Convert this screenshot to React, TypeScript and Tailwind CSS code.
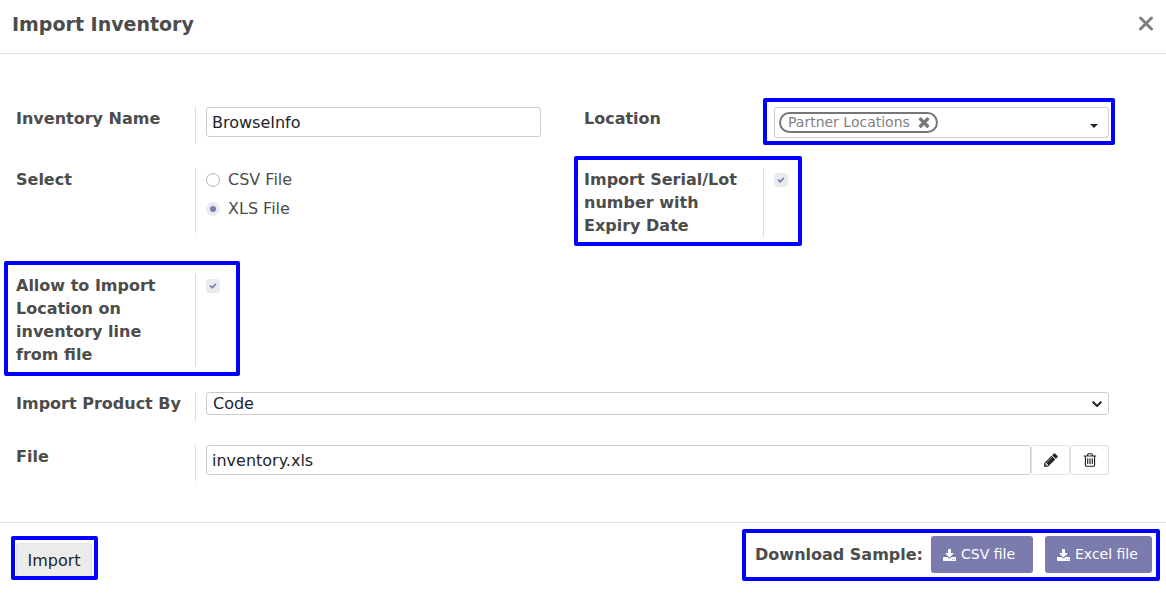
import { useState, type ReactNode } from "react";

const icons = {
  download:
    "M1280 1344q0-26-19-45t-45-19-45 19-19 45 19 45 45 19 45-19 19-45zm256 0q0-26-19-45t-45-19-45 19-19 45 19 45 45 19 45-19 19-45zm128-224v320q0 40-28 68t-68 28h-1472q-40 0-68-28t-28-68v-320q0-40 28-68t68-28h465l135 136q58 56 136 56t136-56l136-136h464q40 0 68 28t28 68zm-325-569q17 41-14 70l-448 448q-18 19-45 19t-45-19l-448-448q-31-29-14-70 17-39 59-39h256v-448q0-26 19-45t45-19h256q26 0 45 19t19 45v448h256q42 0 59 39z",
  pencil:
    "M491 1536l91-91-235-235-91 91v107h128v128h107zm523-928q0-22-22-22-10 0-17 7l-542 542q-7 7-7 17 0 22 22 22 10 0 17-7l542-542q7-7 7-17zm-54-192l416 416-832 832h-416v-416zm683 96q0 53-37 90l-166 166-416-416 166-165q36-38 90-38 53 0 91 38l235 234q37 39 37 91z",
  trash:
    "M704 736v576q0 14-9 23t-23 9h-64q-14 0-23-9t-9-23v-576q0-14 9-23t23-9h64q14 0 23 9t9 23zm256 0v576q0 14-9 23t-23 9h-64q-14 0-23-9t-9-23v-576q0-14 9-23t23-9h64q14 0 23 9t9 23zm256 0v576q0 14-9 23t-23 9h-64q-14 0-23-9t-9-23v-576q0-14 9-23t23-9h64q14 0 23 9t9 23zm128 724v-948h-896v948q0 22 7 40.5t14.5 27 10.5 8.5h832q3 0 10.5-8.5t14.5-27 7-40.5zm-672-1076h448l-48-117q-7-9-17-11h-317q-10 2-17 11zm928 32v64q0 14-9 23t-23 9h-96v948q0 83-47 143.5t-113 60.5h-832q-66 0-113-58.5t-47-141.5v-952h-96q-14 0-23-9t-9-23v-64q0-14 9-23t23-9h309l70-167q15-37 54-63t79-26h320q40 0 79 26t54 63l70 167h309q14 0 23 9t9 23z",
  times:
    "M1490 1322q0 40-28 68l-136 136q-28 28-68 28t-68-28l-294-294-294 294q-28 28-68 28t-68-28l-136-136q-28-28-28-68t28-68l294-294-294-294q-28-28-28-68t28-68l136-136q28-28 68-28t68 28l294 294 294-294q28-28 68-28t68 28l136 136q28 28 28 68t-28 68l-294 294 294 294q28 28 28 68z",
  check:
    "M1671 566q0 40-28 68l-724 724-136 136q-28 28-68 28t-68-28l-136-136-362-362q-28-28-28-68t28-68l136-136q28-28 68-28t68 28l294 295 656-657q28-28 68-28t68 28l136 136q28 28 28 68z",
};

function Icon({ name, className, viewBox = "0 0 1792 1792" }: { name: keyof typeof icons; className: string; viewBox?: string }) {
  return (
    <svg viewBox={viewBox} fill="currentColor" aria-hidden="true" className={className}>
      <path d={icons[name]} />
    </svg>
  );
}

/* Blue frame laid over the part of the form that it points out. */
function Highlight({ className }: { className: string }) {
  return <span aria-hidden="true" className={`pointer-events-none absolute rounded-xs border-4 border-[#0000ff] ${className}`} />;
}

function Field({ label, htmlFor, divider = true, children }: { label: string; htmlFor?: string; divider?: boolean; children: ReactNode }) {
  return (
    <div className="flex">
      <div className={`w-[180px] shrink-0 border-r pr-2 ${divider ? "border-[#dddddd]" : "border-transparent"}`}>
        <label htmlFor={htmlFor} className="block font-bold">
          {label}
        </label>
      </div>
      <div className="min-w-0 flex-1 pl-2.5">{children}</div>
    </div>
  );
}

function Checkbox({ id }: { id: string }) {
  const [on, setOn] = useState(true);
  return (
    <span className="relative mt-[5px] block size-3.5">
      <input
        id={id}
        type="checkbox"
        checked={on}
        onChange={() => setOn(!on)}
        className="block size-3.5 appearance-none rounded-[3px] border border-[#adb5bd] bg-white checked:border-[#e9ecef] checked:bg-[#e9ecef]"
      />
      {on && <Icon name="check" className="pointer-events-none absolute inset-0 m-auto size-2 text-[#7c7bad]" />}
    </span>
  );
}

export default function App() {
  const [name, setName] = useState("BrowseInfo");
  const [format, setFormat] = useState("XLS File");
  const [tagged, setTagged] = useState(true);
  const [file, setFile] = useState("inventory.xls");
  const box = "rounded-[3px] border border-[#cccccc] bg-white text-[#212529]";

  return (
    <div className="bg-white font-['DejaVu_Sans',sans-serif] text-[16px] leading-[23px] text-[#4c4c4c]">
      <header className="flex items-center justify-between border-b border-[#dee2e6] px-3 pt-2.5 pb-[15px]">
        <h1 className="text-[19px] leading-7 font-bold">Import Inventory</h1>
        <button type="button" aria-label="Close" className="text-[#7f7f7f]">
          <svg viewBox="0 0 16 16" className="size-4" stroke="currentColor" strokeWidth="3" strokeLinecap="round">
            <path d="M2.500 2l11 11M13.500 2l-11 11" />
          </svg>
        </button>
      </header>

      <main className="pt-[53px] pr-[57px] pb-[41px] pl-4">
        <div className="grid grid-cols-2 items-start gap-x-[43px] gap-y-[25px]">
          <Field label="Inventory Name" htmlFor="inventory-name">
            <div className="h-9">
              <input
                id="inventory-name"
                value={name}
                onChange={(e) => setName(e.target.value)}
                className={`block h-[30px] w-full px-[5px] ${box}`}
              />
            </div>
          </Field>
          <Field label="Location" htmlFor="location" divider={false}>
            <div className={`relative flex h-[31px] items-center pr-2 pl-1 ${box}`}>
              {tagged && (
                <span className="flex h-[21px] shrink-0 items-center gap-1.5 rounded-full border-2 border-[#777777] pr-1 pb-0.5 pl-[7px] text-[14px] leading-4 text-[#7f7f7f]">
                  Partner Locations
                  <button type="button" aria-label="Remove Partner Locations" onClick={() => setTagged(false)}>
                    <Icon name="times" className="size-4 text-[#777777]" />
                  </button>
                </span>
              )}
              <input id="location" className="min-w-0 flex-1 bg-transparent px-1 outline-none" />
              <svg viewBox="0 0 8 4" className="mt-1.5 mr-0.5 h-1 w-2 shrink-0" fill="currentColor" aria-hidden="true">
                <path d="M0 0h8L4 4z" />
              </svg>
              <Highlight className="-top-2.5 -right-[7px] -bottom-2 -left-3" />
            </div>
          </Field>

          <div role="radiogroup" aria-label="Select">
            <Field label="Select">
              <div className="flex flex-col gap-1.5 pb-[13px]">
                {["CSV File", "XLS File"].map((option) => (
                  <label key={option} className="flex items-center gap-2">
                    <span className="relative block size-3.5">
                      <input
                        type="radio"
                        name="format"
                        checked={format === option}
                        onChange={() => setFormat(option)}
                        className="block size-3.5 appearance-none rounded-full border border-[#adb5bd] bg-white checked:border-[#e9ecef] checked:bg-[#e9ecef]"
                      />
                      {format === option && (
                        <span className="pointer-events-none absolute inset-0 m-auto size-1.5 rounded-full bg-[#7c7bad]" />
                      )}
                    </span>
                    {option}
                  </label>
                ))}
              </div>
            </Field>
          </div>
          <div className="relative">
            <Field label="Import Serial/Lot number with Expiry Date" htmlFor="serial">
              <Checkbox id="serial" />
            </Field>
            <Highlight className="-top-3 -bottom-[9px] -left-2.5 w-[228px]" />
          </div>

          <div className="relative mt-3">
            <Field label="Allow to Import Location on inventory line from file" htmlFor="allow-location">
              <Checkbox id="allow-location" />
            </Field>
            <Highlight className="-top-[13px] -bottom-2.5 -left-3 w-[236px]" />
          </div>
        </div>

        <div className="mt-[26px] flex flex-col gap-6">
          <Field label="Import Product By" htmlFor="product-by">
            <div className="relative h-[29px]">
              <select id="product-by" className={`block h-[23px] w-full appearance-none px-1.5 leading-5 ${box}`}>
                <option>Code</option>
                <option>Barcode</option>
                <option>Name</option>
              </select>
              <svg
                viewBox="0 0 10 6"
                className="pointer-events-none absolute top-[9px] right-[7px] h-1.5 w-2.5 text-[#212529]"
                fill="none"
                stroke="currentColor"
                strokeWidth="2"
                aria-hidden="true"
              >
                <path d="M0.7 0.7L5 5l4.300-4.300" />
              </svg>
            </div>
          </Field>
          <Field label="File" htmlFor="file-name">
            <div className="flex h-9 items-start">
              <input
                id="file-name"
                value={file}
                onChange={(e) => setFile(e.target.value)}
                className={`block h-[30px] min-w-0 flex-1 px-[5px] ${box}`}
              />
              <button
                type="button"
                aria-label="Edit"
                className="flex h-[30px] w-[39px] items-center justify-center rounded-[3px] border border-[#dee2e6] text-[#212529]"
              >
                <Icon name="pencil" className="size-4" />
              </button>
              <button
                type="button"
                aria-label="Delete"
                onClick={() => setFile("")}
                className="flex h-[30px] w-[39px] items-center justify-center rounded-[3px] border border-[#dee2e6] text-[#212529]"
              >
                <Icon name="trash" className="size-4" />
              </button>
            </div>
          </Field>
        </div>
      </main>

      <footer className="flex items-start justify-between border-t border-[#dee2e6] pt-[13px] pr-3.5 pb-7 pl-4">
        <div className="relative mt-[7px]">
          <button
            type="button"
            className="block h-[34px] w-[76px] rounded-[3px] border border-[#e2e2e6] bg-[#ebebeb] text-center text-[#212529]"
          >
            Import
          </button>
          <Highlight className="-top-[7px] -right-1.5 -bottom-[3px] -left-[5px]" />
        </div>
        <div className="relative flex items-center gap-2">
          <span className="font-bold">Download Sample:</span>
          <div className="flex gap-3">
            <button
              type="button"
              className="flex h-[37px] w-[102px] items-center gap-[5px] rounded-[3px] bg-[#7c7bad] pl-3 text-[14px] text-white"
            >
              <Icon name="download" viewBox="0 0 1664 1536" className="h-3 w-[13px]" />
              CSV file
            </button>
            <button
              type="button"
              className="flex h-[37px] w-[107px] items-center gap-[5px] rounded-[3px] bg-[#7c7bad] pl-3 text-[14px] text-white"
            >
              <Icon name="download" viewBox="0 0 1664 1536" className="h-3 w-[13px]" />
              Excel file
            </button>
          </div>
          <Highlight className="-top-[7px] -right-2 -bottom-2 -left-[13px]" />
        </div>
      </footer>
    </div>
  );
}
